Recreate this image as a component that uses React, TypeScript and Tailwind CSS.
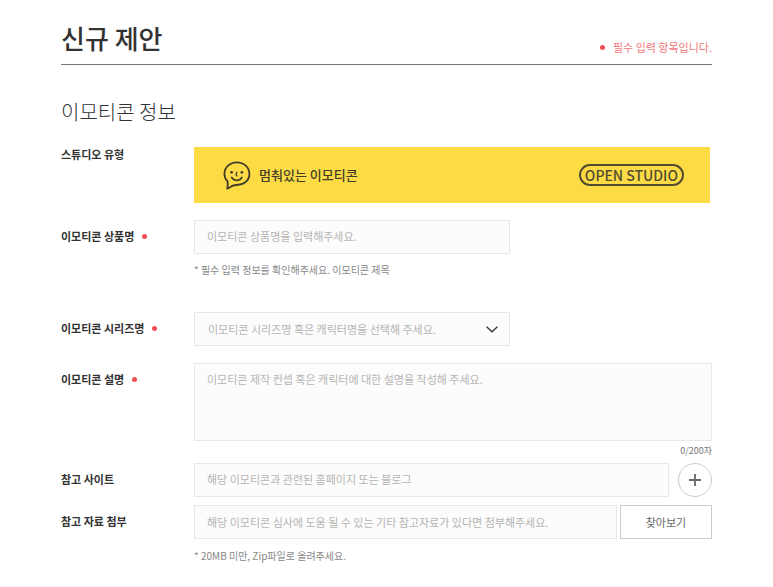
import type { ReactNode } from "react";

const fieldBox =
  "border border-[#e8e8e8] bg-[#fcfcfc] px-3 text-[11px] text-[#333] placeholder:text-[#b4b4b4] placeholder:opacity-100 outline-none focus:border-[#999]";

function Dot() {
  return <span aria-hidden="true" className="size-[5px] shrink-0 rounded-full bg-[#f04f54]" />;
}

function Row({
  label,
  htmlFor,
  required = false,
  className = "",
  children,
}: {
  label: string;
  htmlFor?: string;
  required?: boolean;
  className?: string;
  children: ReactNode;
}) {
  const text = "flex h-8 items-center gap-2 text-[11px] font-bold text-[#333]";
  return (
    <div className={`flex ${className}`}>
      <div className="w-[133px] shrink-0">
        {htmlFor ? (
          <label htmlFor={htmlFor} className={text}>
            {label}
            {required && <Dot />}
          </label>
        ) : (
          <div className="text-[11px] leading-[14px] font-bold text-[#333]">{label}</div>
        )}
      </div>
      <div className="min-w-0 flex-1">{children}</div>
    </div>
  );
}

function SmileBubble() {
  return (
    <svg
      viewBox="0 0 28 30"
      className="h-[30px] w-7"
      fill="none"
      stroke="#423d2b"
      strokeWidth="1.8"
      strokeLinecap="round"
      strokeLinejoin="round"
      aria-hidden="true"
    >
      <path d="M4.500 21.200C2.500 19.200 1.400 16.700 1.400 13.900C1.400 7.300 7 2.400 13.900 2.400S26.400 7.300 26.400 13.900S20.800 25 13.900 25C12.300 25 11 25.100 9.800 25.600C8 26.500 6.500 27.900 4.200 28.600C4.800 26.200 5.100 23.800 4.500 21.200Z" />
      <path d="M8.700 17.400C10 19.300 11.700 20.300 13.700 20.300S17.500 19.300 18.800 17.400" strokeWidth="1.700" />
      <path d="M13.900 12.300C12.800 14 12.600 15.500 14 15.800" strokeWidth="1.300" />
      <circle cx="8.600" cy="12.300" r="1.400" fill="#423d2b" stroke="none" />
      <circle cx="18.900" cy="12.300" r="1.400" fill="#423d2b" stroke="none" />
    </svg>
  );
}

export default function App() {
  return (
    <main className="bg-white px-[61px] pt-[18px] pb-5 font-['Noto_Sans_CJK_KR','Noto_Sans',sans-serif]">
      <header className="flex items-end justify-between border-b border-[#777] pb-[6px]">
        <h1 className="text-[26px] leading-10 font-medium text-[#333]">신규 제안</h1>
        <p className="flex items-center gap-2 pb-[3px] text-[11px] leading-4 text-[#f0787c]">
          <Dot />
          필수 입력 항목입니다.
        </p>
      </header>

      <form>
        <h2 className="mt-[31px] text-[20px] leading-8 font-light text-[#333]">이모티콘 정보</h2>

        <Row label="스튜디오 유형" className="mt-[19px]">
          <div className="mr-[2px] flex h-14 items-center justify-between bg-[#fddb44] pr-[26px] pl-[29px]">
            <div className="flex items-center gap-2">
              <SmileBubble />
              <span className="text-[13px] font-medium text-[#423d2b]">멈춰있는 이모티콘</span>
            </div>
            <span className="flex h-[22px] items-center rounded-full border-2 border-[#514b32] px-1 text-[14px] leading-4 font-medium text-[#514b32]">
              OPEN STUDIO
            </span>
          </div>
        </Row>

        <Row label="이모티콘 상품명" htmlFor="name" required className="mt-[17px]">
          <input
            id="name"
            type="text"
            placeholder="이모티콘 상품명을 입력해주세요."
            className={`block h-[34px] w-full max-w-[316px] pb-[2px] ${fieldBox}`}
          />
          <p className="mt-2 text-[10px] leading-4 text-[#888]">
            * 필수 입력 정보를 확인해주세요. 이모티콘 제목
          </p>
        </Row>

        <Row label="이모티콘 시리즈명" htmlFor="series" required className="mt-[34px]">
          <div className="relative max-w-[316px]">
            <select
              id="series"
              defaultValue=""
              className="block h-[34px] w-full appearance-none border border-[#e8e8e8] bg-[#fcfcfc] px-[13px] text-[11px] text-[#b4b4b4] outline-none focus:border-[#999]"
            >
              <option value="">이모티콘 시리즈명 혹은 캐릭터명을 선택해 주세요.</option>
            </select>
            <svg
              viewBox="0 0 12 7"
              className="pointer-events-none absolute top-[14px] right-3 h-[7px] w-3"
              fill="none"
              stroke="#333"
              strokeWidth="1.300"
              aria-hidden="true"
            >
              <path d="M.6 .8L6 5.800L11.400 .8" />
            </svg>
          </div>
        </Row>

        <Row label="이모티콘 설명" htmlFor="description" required className="mt-[17px]">
          <textarea
            id="description"
            maxLength={200}
            placeholder="이모티콘 제작 컨셉 혹은 캐릭터에 대한 설명을 작성해 주세요."
            className={`block h-[78px] w-full resize-none py-[7px] leading-4 ${fieldBox}`}
          />
          <p className="mt-[2px] text-right text-[9px] leading-4 text-[#777]">0/200자</p>
        </Row>

        <Row label="참고 사이트" htmlFor="site" className="mt-1">
          <div className="flex gap-[9px]">
            <input
              id="site"
              type="url"
              placeholder="해당 이모티콘과 관련된 홈페이지 또는 블로그"
              className={`h-[34px] min-w-0 flex-1 pb-[2px] ${fieldBox}`}
            />
            <button
              type="button"
              aria-label="참고 사이트 추가"
              className="flex size-[34px] items-center justify-center rounded-full border border-[#ccc] bg-white"
            >
              <svg viewBox="0 0 12 12" className="size-3" stroke="#666" strokeWidth="1.800" aria-hidden="true">
                <path d="M6 0V12M0 6H12" />
              </svg>
            </button>
          </div>
        </Row>

        <Row label="참고 자료 첨부" htmlFor="attachment" className="mt-2">
          <div className="flex gap-[3px]">
            <input
              id="attachment"
              type="text"
              readOnly
              placeholder="해당 이모티콘 심사에 도움 될 수 있는 기타 참고자료가 있다면 첨부해주세요."
              className={`h-[34px] min-w-0 flex-1 ${fieldBox}`}
            />
            <button
              type="button"
              className="h-[34px] w-[92px] border border-[#ccc] bg-white text-[11px] text-[#666]"
            >
              찾아보기
            </button>
          </div>
          <p className="mt-[9px] text-[10px] leading-4 text-[#888]">* 20MB 미만, Zip파일로 올려주세요.</p>
        </Row>
      </form>
    </main>
  );
}
